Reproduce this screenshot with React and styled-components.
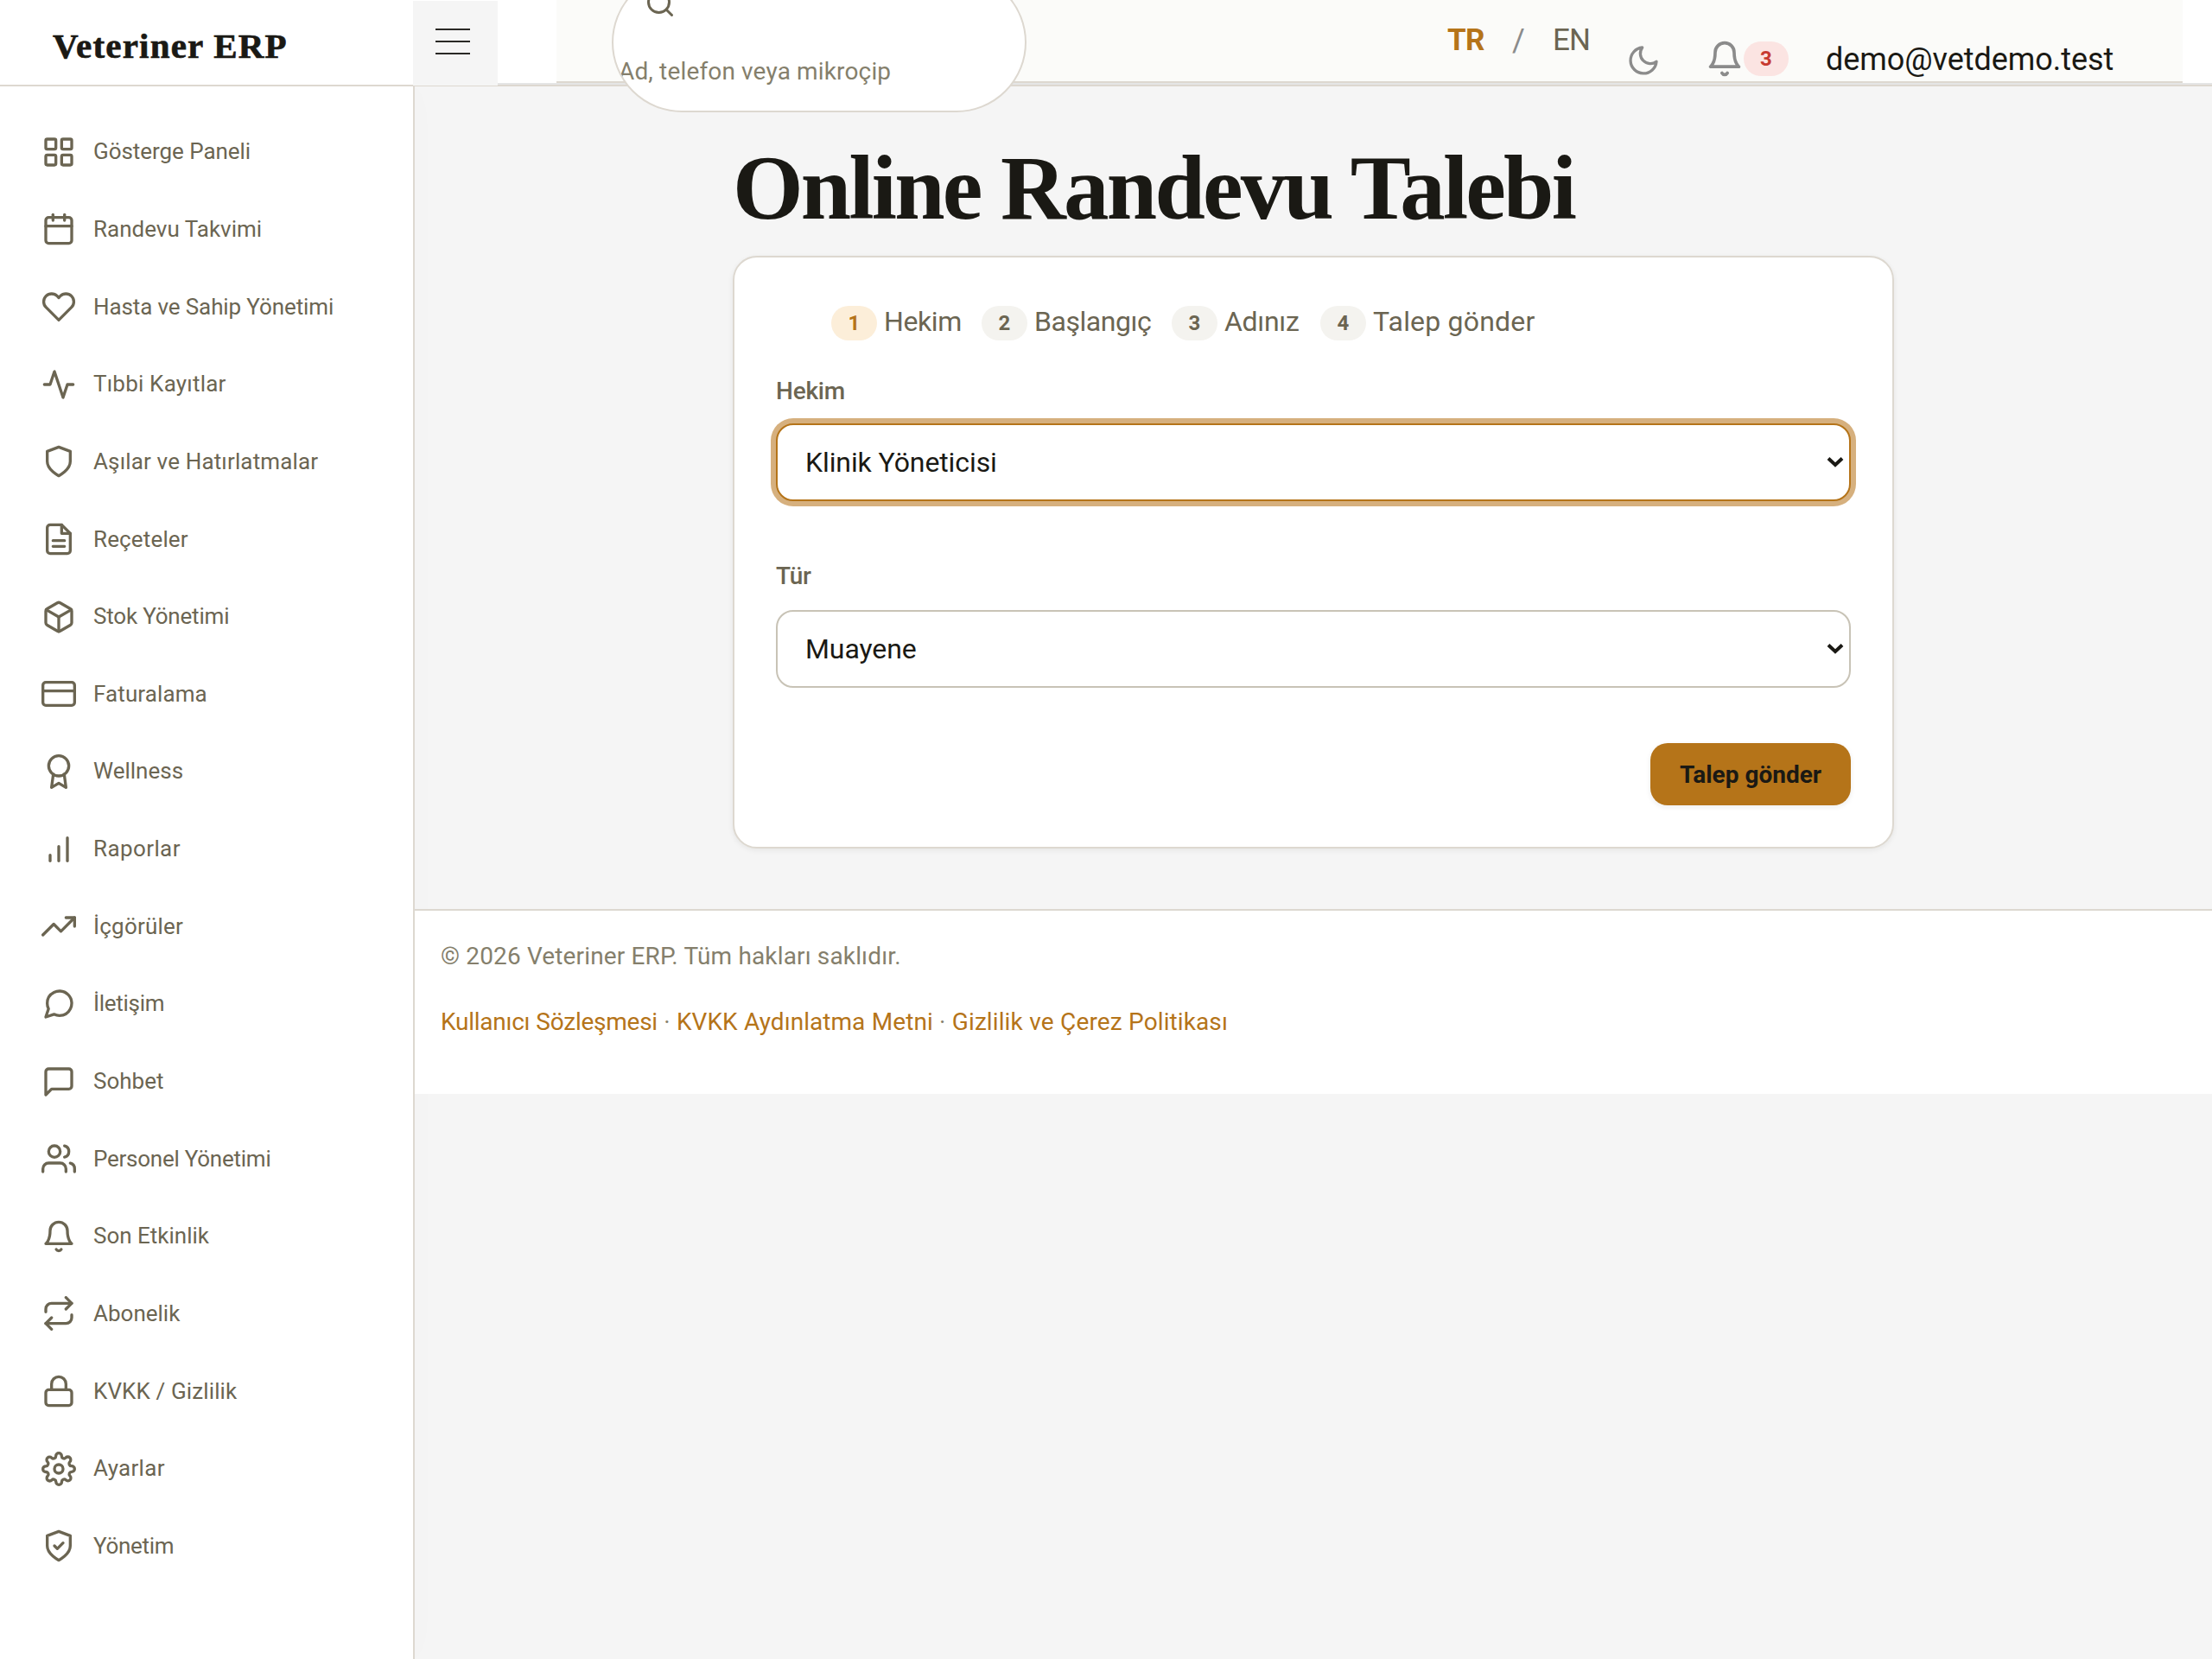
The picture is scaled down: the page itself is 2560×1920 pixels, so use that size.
import styled, { createGlobalStyle } from "styled-components";
import {
  FiActivity,
  FiAward,
  FiBarChart,
  FiBell,
  FiBox,
  FiCalendar,
  FiCreditCard,
  FiHeart,
  FiLock,
  FiMessageCircle,
  FiMessageSquare,
  FiMoon,
  FiRepeat,
  FiSearch,
  FiSettings,
  FiShield,
  FiTrendingUp,
  FiUsers,
} from "react-icons/fi";

const GlobalStyle = createGlobalStyle`
  :root {
    --ink: #1a1914;
    --ink-soft: #6b6552;
    --ink-muted: #857f6c;
    --accent: #b57419;
    --line: #ddd8d0;
    --line-strong: #c8c3b6;
    --page-bg: #f5f5f5;
    --sans: Roboto, "Liberation Sans", sans-serif;
    --serif: "Liberation Serif", serif;
  }

  * {
    box-sizing: border-box;
  }

  body {
    margin: 0;
    background: var(--page-bg);
    color: var(--ink);
    font-family: var(--sans);
  }
`;

const Page = styled.div`
  height: 1920px;
  display: flex;
  flex-direction: column;
  overflow: hidden;
`;

/**
 * Top bar with the brand, the menu toggle and the user tools.
 * @component
 */
const Header = styled.header`
  position: relative;
  z-index: 1;
  flex: none;
  height: 100px;
  display: flex;
  background: #fff;
  border-bottom: 2px solid var(--line);
`;

const Brand = styled.div`
  flex: none;
  width: 478px;
  height: 98px;
  padding: 7px 0 0 61px;
  font-family: var(--serif);
  font-size: 41px;
  font-weight: 700;
  line-height: 92px;
  letter-spacing: 1.2px;
  white-space: nowrap;
  -webkit-text-stroke: 0.7px var(--ink);
`;

const MenuToggle = styled.button`
  flex: none;
  width: 98px;
  height: 98px;
  margin: 1px 0 -1px;
  padding: 0 0 4px 26px;
  border: 0;
  background: var(--page-bg);
  display: flex;
  flex-direction: column;
  justify-content: center;
  gap: 12px;
`;

const MenuLine = styled.span`
  width: 40px;
  height: 2px;
  background: #2a2925;
`;

const NavBar = styled.div`
  flex: 1;
  height: 98px;
  padding: 0 34px 0 68px;
  border-bottom: 2px solid #e5e5e5;
`;

const NavInner = styled.div`
  height: 96px;
  padding-left: 64px;
  display: flex;
  background: #fbfbf9;
  border-bottom: 2px solid var(--line);
`;

const SearchPill = styled.label`
  flex: none;
  width: 480px;
  height: 162px;
  margin-top: -32px;
  overflow: hidden;
  display: flex;
  flex-direction: column;
  background: #fff;
  border: 2px solid var(--line);
  border-radius: 81px;
`;

const SearchIcon = styled(FiSearch)`
  flex: none;
  margin: 16px 0 0 36px;
  font-size: 36px;
  color: var(--ink-soft);
`;

const SearchInput = styled.input`
  width: 100%;
  height: 48px;
  margin-top: 36px;
  padding: 0 6px;
  border: 0;
  background: transparent;
  font-family: var(--sans);
  font-size: 28px;
  letter-spacing: 0.15px;
  outline: none;

  &::placeholder {
    color: var(--ink-muted);
    opacity: 1;
  }
`;

const Languages = styled.div`
  width: 208px;
  margin: 25px 0 0 487px;
  display: flex;
  font-size: 36px;
  line-height: 44px;
  color: #8b8b8b;
`;

const Language = styled.span`
  width: ${(props) => props.$width};
  color: ${(props) => (props.$active ? "var(--accent)" : "var(--ink-soft)")};
  font-weight: ${(props) => (props.$active ? 700 : 400)};
  font-size: 35px;
  letter-spacing: -0.8px;
`;

const Slash = styled.span`
  width: 47px;
`;

const ThemeButton = styled.span`
  width: 92px;
  margin-left: -1px;
  padding-top: 50px;
  color: #8b8b8b;
  font-size: 40px;
  line-height: 0;
`;

const Alerts = styled.span`
  width: 139px;
  padding-top: 46px;
  display: flex;
  color: #8b8b8b;
  font-size: 44px;
`;

const AlertCount = styled.span`
  width: 52px;
  height: 40px;
  margin-top: 2px;
  border-radius: 20px;
  background: #fbe4e2;
  color: #c73a30;
  font-size: 24px;
  font-weight: 700;
  line-height: 40px;
  text-align: center;
`;

const UserMail = styled.span`
  margin-top: 47px;
  font-size: 36px;
  letter-spacing: -0.05px;
  line-height: 44px;
`;

const Body = styled.div`
  flex: 1;
  display: flex;
`;

const Sidebar = styled.nav`
  flex: none;
  width: 480px;
  padding-top: 31px;
  background: #fff;
  border-right: 2px solid var(--line);
  box-shadow: 0 0 40px rgba(0, 0, 0, 0.015);
`;

const NavItem = styled.a`
  height: 89.65px;
  padding-left: 48px;
  display: flex;
  align-items: center;
  gap: 20px;
  color: var(--ink-soft);
  font-size: 26px;

  svg {
    flex: none;
    width: 40px;
    height: 40px;
  }
`;

const NavText = styled.span`
  padding-bottom: 1px;
  letter-spacing: ${(props) => props.$tracking ?? "0"};
`;

const Content = styled.div`
  flex: 1;
`;

const Main = styled.main`
  width: 1344px;
  margin: 0 auto;
  padding: 58px 0 70px;
`;

const Title = styled.h1`
  margin: 0 0 18px;
  font-family: var(--serif);
  font-size: 105px;
  font-weight: 700;
  line-height: 120px;
  letter-spacing: -2.8px;
  white-space: nowrap;
`;

const Card = styled.section`
  height: 686px;
  padding: 48px;
  background: #fff;
  border: 2px solid var(--line);
  border-radius: 28px;
  box-shadow: 0 2px 6px rgba(26, 25, 20, 0.07);
`;

const Steps = styled.ol`
  height: 56px;
  margin: 0 0 31px;
  padding: 0 0 0 64px;
  display: flex;
  align-items: center;
  gap: 24px;
  list-style: none;
`;

const Step = styled.li`
  display: flex;
  align-items: center;
  gap: 8px;
  color: var(--ink-soft);
  font-size: 32px;
`;

const StepNumber = styled.span`
  width: 53px;
  height: 40px;
  border-radius: 20px;
  background: ${(props) => (props.$active ? "#fceed9" : "#f4f3ef")};
  color: ${(props) => (props.$active ? "var(--accent)" : "var(--ink-soft)")};
  font-size: 24px;
  font-weight: 700;
  line-height: 40px;
  text-align: center;
`;

const StepName = styled.span`
  width: ${(props) => props.$width};
  padding-bottom: 5px;
  letter-spacing: ${(props) => props.$tracking ?? "0"};
  white-space: nowrap;
`;

const Field = styled.div`
  margin-bottom: ${(props) => props.$after};
`;

const FieldLabel = styled.label`
  display: block;
  margin-bottom: ${(props) => props.$gap};
  color: var(--ink-soft);
  font-size: 28px;
  font-weight: 500;
  letter-spacing: -0.2px;
  line-height: 40px;
`;

const SelectWrap = styled.div`
  position: relative;
`;

const Select = styled.select`
  display: block;
  width: 100%;
  height: 90px;
  padding: 0 32px;
  appearance: none;
  background: #fff;
  border: 2px solid ${(props) => (props.$focused ? "var(--accent)" : "var(--line-strong)")};
  border-radius: 20px;
  box-shadow: ${(props) => (props.$focused ? "0 0 0 6px #d6b07e" : "none")};
  color: var(--ink);
  font-family: var(--sans);
  font-size: 32px;
  letter-spacing: -0.1px;
  outline: none;
`;

const Arrow = styled.svg`
  position: absolute;
  top: 38px;
  right: 8px;
  width: 20px;
  height: 14px;
`;

const Actions = styled.div`
  display: flex;
  justify-content: flex-end;
`;

const SubmitButton = styled.button`
  width: 232px;
  height: 72px;
  padding: 0;
  border: 0;
  border-radius: 20px;
  background: var(--accent);
  box-shadow: 0 2px 6px rgba(26, 25, 20, 0.08);
  color: var(--ink);
  font-family: var(--sans);
  font-size: 28px;
  font-weight: 700;
`;

const Footer = styled.footer`
  height: 214px;
  padding: 31px 30px 0;
  display: flex;
  flex-direction: column;
  gap: 32px;
  background: #fff;
  border-top: 2px solid var(--line);
  color: var(--ink-muted);
  font-size: 28px;
  line-height: 44px;
`;

const Copyright = styled.div`
  letter-spacing: 0.15px;
`;

const FooterLinks = styled.div`
  word-spacing: 0.4px;
`;

const FooterLink = styled.a`
  color: var(--accent);
  letter-spacing: ${(props) => props.$tracking ?? "0"};
`;

const strokeProps = {
  viewBox: "0 0 24 24",
  fill: "none",
  stroke: "currentColor",
  strokeWidth: 2,
  strokeLinecap: "round",
  strokeLinejoin: "round",
};

const GridIcon = () => (
  <svg {...strokeProps}>
    <rect x="3" y="3" width="7" height="7" rx="1" />
    <rect x="14" y="3" width="7" height="7" rx="1" />
    <rect x="14" y="14" width="7" height="7" rx="1" />
    <rect x="3" y="14" width="7" height="7" rx="1" />
  </svg>
);

const FileIcon = () => (
  <svg {...strokeProps}>
    <path d="M14 2H6a2 2 0 0 0-2 2v16a2 2 0 0 0 2 2h12a2 2 0 0 0 2-2V8z" />
    <path d="M14 2v6h6M8 13h8M8 17h8" />
  </svg>
);

const ShieldCheckIcon = () => (
  <svg {...strokeProps}>
    <path d="M12 22s8-4 8-10V5l-8-3-8 3v7c0 6 8 10 8 10z" />
    <path d="M9 12l2 2 4-4" />
  </svg>
);

const navItems = [
  { label: "Gösterge Paneli", icon: GridIcon, tracking: "-0.05px" },
  { label: "Randevu Takvimi", icon: FiCalendar },
  { label: "Hasta ve Sahip Yönetimi", icon: FiHeart, tracking: "-0.12px" },
  { label: "Tıbbi Kayıtlar", icon: FiActivity, tracking: "0.2px" },
  { label: "Aşılar ve Hatırlatmalar", icon: FiShield, tracking: "0.15px" },
  { label: "Reçeteler", icon: FileIcon, tracking: "0.15px" },
  { label: "Stok Yönetimi", icon: FiBox, tracking: "-0.2px" },
  { label: "Faturalama", icon: FiCreditCard, tracking: "0.1px" },
  { label: "Wellness", icon: FiAward },
  { label: "Raporlar", icon: FiBarChart, tracking: "0.4px" },
  { label: "İçgörüler", icon: FiTrendingUp, tracking: "0.2px" },
  { label: "İletişim", icon: FiMessageCircle, tracking: "-0.3px" },
  { label: "Sohbet", icon: FiMessageSquare },
  { label: "Personel Yönetimi", icon: FiUsers, tracking: "-0.25px" },
  { label: "Son Etkinlik", icon: FiBell },
  { label: "Abonelik", icon: FiRepeat },
  { label: "KVKK / Gizlilik", icon: FiLock, tracking: "0.12px" },
  { label: "Ayarlar", icon: FiSettings, tracking: "0.3px" },
  { label: "Yönetim", icon: ShieldCheckIcon, tracking: "-0.3px" },
];

const steps = [
  { name: "Hekim", width: "89px", tracking: "-0.4px" },
  { name: "Başlangıç", width: "135px", tracking: "-0.45px" },
  { name: "Adınız", width: "87px", tracking: "-0.3px" },
  { name: "Talep gönder", width: "190px", tracking: "0.2px" },
];

/**
 * Labelled drop-down of the request form.
 *
 * @param {string}  label    - Field label
 * @param {string}  value    - Selected option
 * @param {boolean} focused  - Draws the focus ring
 * @param {string}  gap      - Space between label and control
 * @param {string}  after    - Space below the field
 * @component
 */
function SelectField({ id, label, value, focused, gap, after }) {
  return (
    <Field $after={after}>
      <FieldLabel htmlFor={id} $gap={gap}>
        {label}
      </FieldLabel>
      <SelectWrap>
        <Select id={id} $focused={focused} defaultValue={value}>
          <option>{value}</option>
        </Select>
        <Arrow viewBox="0 0 20 14">
          <path d="M2 2.5l8 7.5 8-7.5" fill="none" stroke="#1a1914" strokeWidth="4" />
        </Arrow>
      </SelectWrap>
    </Field>
  );
}

export default function App() {
  return (
    <Page>
      <GlobalStyle />
      <Header>
        <Brand>Veteriner ERP</Brand>
        <MenuToggle aria-label="Menü">
          <MenuLine />
          <MenuLine />
          <MenuLine />
        </MenuToggle>
        <NavBar>
          <NavInner>
            <SearchPill>
              <SearchIcon />
              <SearchInput placeholder="Ad, telefon veya mikroçip" />
            </SearchPill>
            <Languages>
              <Language $active $width="75px">
                TR
              </Language>
              <Slash>/</Slash>
              <Language $width="60px">EN</Language>
            </Languages>
            <ThemeButton>
              <FiMoon />
            </ThemeButton>
            <Alerts>
              <FiBell />
              <AlertCount>3</AlertCount>
            </Alerts>
            <UserMail>demo@vetdemo.test</UserMail>
          </NavInner>
        </NavBar>
      </Header>
      <Body>
        <Sidebar>
          {navItems.map(({ label, icon: Icon, tracking }) => (
            <NavItem key={label}>
              <Icon />
              <NavText $tracking={tracking}>{label}</NavText>
            </NavItem>
          ))}
        </Sidebar>
        <Content>
          <Main>
            <Title>Online Randevu Talebi</Title>
            <Card>
              <Steps>
                {steps.map(({ name, width, tracking }, index) => (
                  <Step key={name}>
                    <StepNumber $active={index === 0}>{index + 1}</StepNumber>
                    <StepName $width={width} $tracking={tracking}>
                      {name}
                    </StepName>
                  </Step>
                ))}
              </Steps>
              <SelectField id="vet" label="Hekim" value="Klinik Yöneticisi" focused gap="17px" after="67px" />
              <SelectField id="kind" label="Tür" value="Muayene" gap="19px" after="64px" />
              <Actions>
                <SubmitButton>Talep gönder</SubmitButton>
              </Actions>
            </Card>
          </Main>
          <Footer>
            <Copyright>© 2026 Veteriner ERP. Tüm hakları saklıdır.</Copyright>
            <FooterLinks>
              <FooterLink $tracking="-0.25px">Kullanıcı Sözleşmesi</FooterLink> ·{" "}
              <FooterLink $tracking="0.05px">KVKK Aydınlatma Metni</FooterLink> ·{" "}
              <FooterLink $tracking="0.1px">Gizlilik ve Çerez Politikası</FooterLink>
            </FooterLinks>
          </Footer>
        </Content>
      </Body>
    </Page>
  );
}
